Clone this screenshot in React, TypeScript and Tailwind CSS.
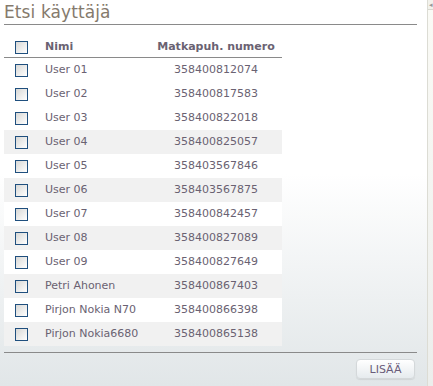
const users = [
  { name: 'User 01', phone: '358400812074' },
  { name: 'User 02', phone: '358400817583' },
  { name: 'User 03', phone: '358400822018' },
  { name: 'User 04', phone: '358400825057' },
  { name: 'User 05', phone: '358403567846' },
  { name: 'User 06', phone: '358403567875' },
  { name: 'User 07', phone: '358400842457' },
  { name: 'User 08', phone: '358400827089' },
  { name: 'User 09', phone: '358400827649' },
  { name: 'Petri Ahonen', phone: '358400867403' },
  { name: 'Pirjon Nokia N70', phone: '358400866398' },
  { name: 'Pirjon Nokia6680', phone: '358400865138' },
];

function Box() {
  return (
    <span className="block w-[13px] h-[13px] border border-[#1f4f7e] bg-gradient-to-br from-[#d8d8d6] to-[#ffffff]" />
  );
}

export default function App() {
  return (
    <div className="flex w-[433px] h-[386px] bg-gradient-to-b from-[#ffffff] from-45% to-[#e1e6e8] font-['DejaVu_Sans',sans-serif] text-[11px] text-[#6a6272]">
      <div className="w-[427px] pl-[4px] pr-[10px]">
        {/* Title */}
        <div className="h-[25px] border-b border-[#8a8a8a] pt-[1px] text-[17px] leading-[22px] text-[#857a6c] tracking-[0.1px]">
          Etsi käyttäjä
        </div>

        {/* Table */}
        <div className="mt-[12px] w-[278px]">
          <div className="flex items-center h-[21px] border-b border-[#8a8a8a] font-bold text-[#6a6272]">
            <div className="w-[41px] pl-[11px]"><Box /></div>
            <div className="flex-1 leading-none pb-[1px]">Nimi</div>
            <div className="w-[132px] text-center leading-none pb-[1px]">Matkapuh. numero</div>
          </div>
          {users.map((u, i) => (
            <div
              key={u.phone}
              className={`flex items-center h-[24px] ${i >= 3 && i % 2 === 1 ? 'bg-[#f1f1f1]' : i >= 3 ? 'bg-[#ffffff]' : ''}`}
            >
              <div className="w-[41px] pl-[11px]"><Box /></div>
              <div className="flex-1 whitespace-nowrap">{u.name}</div>
              <div className="w-[132px] text-center">{u.phone}</div>
            </div>
          ))}
        </div>

        {/* Footer */}
        <div className="mt-[6px] border-t border-[#8a8a8a] flex justify-end pt-[6px] pr-[2px]">
          <button className="w-[59px] h-[20px] rounded-[4px] border border-[#d4d8da] bg-gradient-to-b from-[#ffffff] to-[#e6ebee] text-[11px] text-[#6a5c7a] leading-none shadow-[0_1px_1px_rgba(0,0,0,0.08)]">
            LISÄÄ
          </button>
        </div>
      </div>

      {/* right edge strip */}
      <div className="flex-1 border-l border-[#dcdcd4] bg-gradient-to-b from-[#fbfbf6] to-[#eceeec]">
        <div className="h-[10px] border-b border-[#d8d8d0] bg-[#f2f2ec] text-[7px] leading-[10px] text-[#999] pl-[1px]">◂</div>
      </div>
    </div>
  );
}
